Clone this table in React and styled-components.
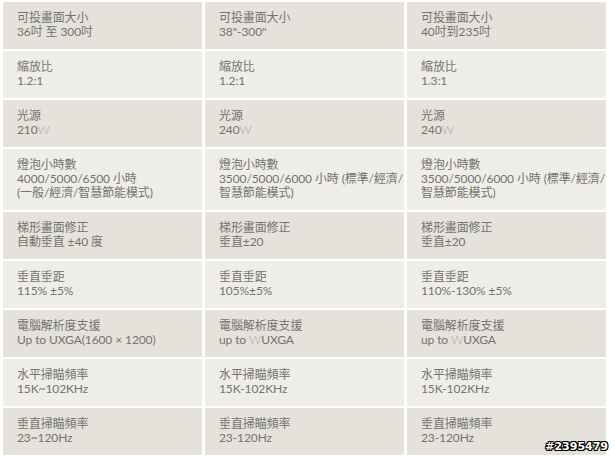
import React from "react";
import styled, { createGlobalStyle } from "styled-components";

const GlobalStyle = createGlobalStyle`
  html, body {
    margin: 0;
    padding: 0;
    background: #ffffff;
  }
  body {
    font-family: "Lato", "Noto Sans CJK TC", sans-serif;
  }
`;

const W = () => <Thin>W</Thin>;

const specs = [
  {
    label: "可投畫面大小",
    values: [["36吋 至 300吋"], ['38"-300"'], ["40吋到235吋"]]
  },
  {
    label: "縮放比",
    values: [["1.2:1"], ["1.2:1"], ["1.3:1"]]
  },
  {
    label: "光源",
    values: [[<>210<W /></>], [<>240<W /></>], [<>240<W /></>]]
  },
  {
    label: "燈泡小時數",
    values: [
      ["4000/5000/6500 小時", "(一般/經濟/智慧節能模式)"],
      ["3500/5000/6000 小時 (標準/經濟/", "智慧節能模式)"],
      ["3500/5000/6000 小時 (標準/經濟/", "智慧節能模式)"]
    ]
  },
  {
    label: "梯形畫面修正",
    values: [["自動垂直 ±40 度"], ["垂直±20"], ["垂直±20"]]
  },
  {
    label: "垂直垂距",
    values: [["115% ±5%"], ["105%±5%"], ["110%-130% ±5%"]]
  },
  {
    label: "電腦解析度支援",
    values: [
      ["Up to UXGA(1600 × 1200)"],
      [<>up to <W />UXGA</>],
      [<>up to <W />UXGA</>]
    ]
  },
  {
    label: "水平掃瞄頻率",
    values: [["15K~102KHz"], ["15K-102KHz"], ["15K-102KHz"]]
  },
  {
    label: "垂直掃瞄頻率",
    values: [["23~120Hz"], ["23-120Hz"], ["23-120Hz"]]
  }
];

const App = () => {
  return (
    <Page>
      <GlobalStyle />
      <Table>
        {specs.map((row, r) =>
          row.values.map((lines, c) => (
            <Cell key={`${r}-${c}`} shade={r % 2 === 0}>
              <Line>{row.label}</Line>
              {lines.map((line, i) => (
                <Line key={i}>{line}</Line>
              ))}
            </Cell>
          ))
        )}
      </Table>
      <Watermark>#2395479</Watermark>
    </Page>
  );
};

export default App;

const Page = styled.div`
  position: relative;
  width: 615px;
  height: 456px;
  overflow: hidden;
  background: #ffffff;
`;

const Table = styled.div`
  display: grid;
  grid-template-columns: repeat(3, 199px);
  column-gap: 3px;
  row-gap: 2px;
  padding: 2px 0 0 3px;
`;

const Cell = styled.div`
  background: ${props => (props.shade ? "#e4e2db" : "#efede8")};
  padding: 9px 0 10px 14px;
  color: #74736f;
  font-size: 12px;
  line-height: 14px;
  letter-spacing: -0.1px;
`;

const Line = styled.div`
  white-space: nowrap;
`;

const Thin = styled.span`
  color: #a9a8a5;
  font-weight: 300;
`;

const Watermark = styled.div`
  position: absolute;
  right: 7px;
  bottom: 3px;
  font-family: "DejaVu Sans", sans-serif;
  font-weight: bold;
  font-size: 11px;
  color: #ffffff;
  text-shadow: -1px -1px 0 #000, 1px -1px 0 #000, -1px 1px 0 #000,
    1px 1px 0 #000, 0 1px 0 #000, 0 -1px 0 #000, 1px 0 0 #000, -1px 0 0 #000;
`;
